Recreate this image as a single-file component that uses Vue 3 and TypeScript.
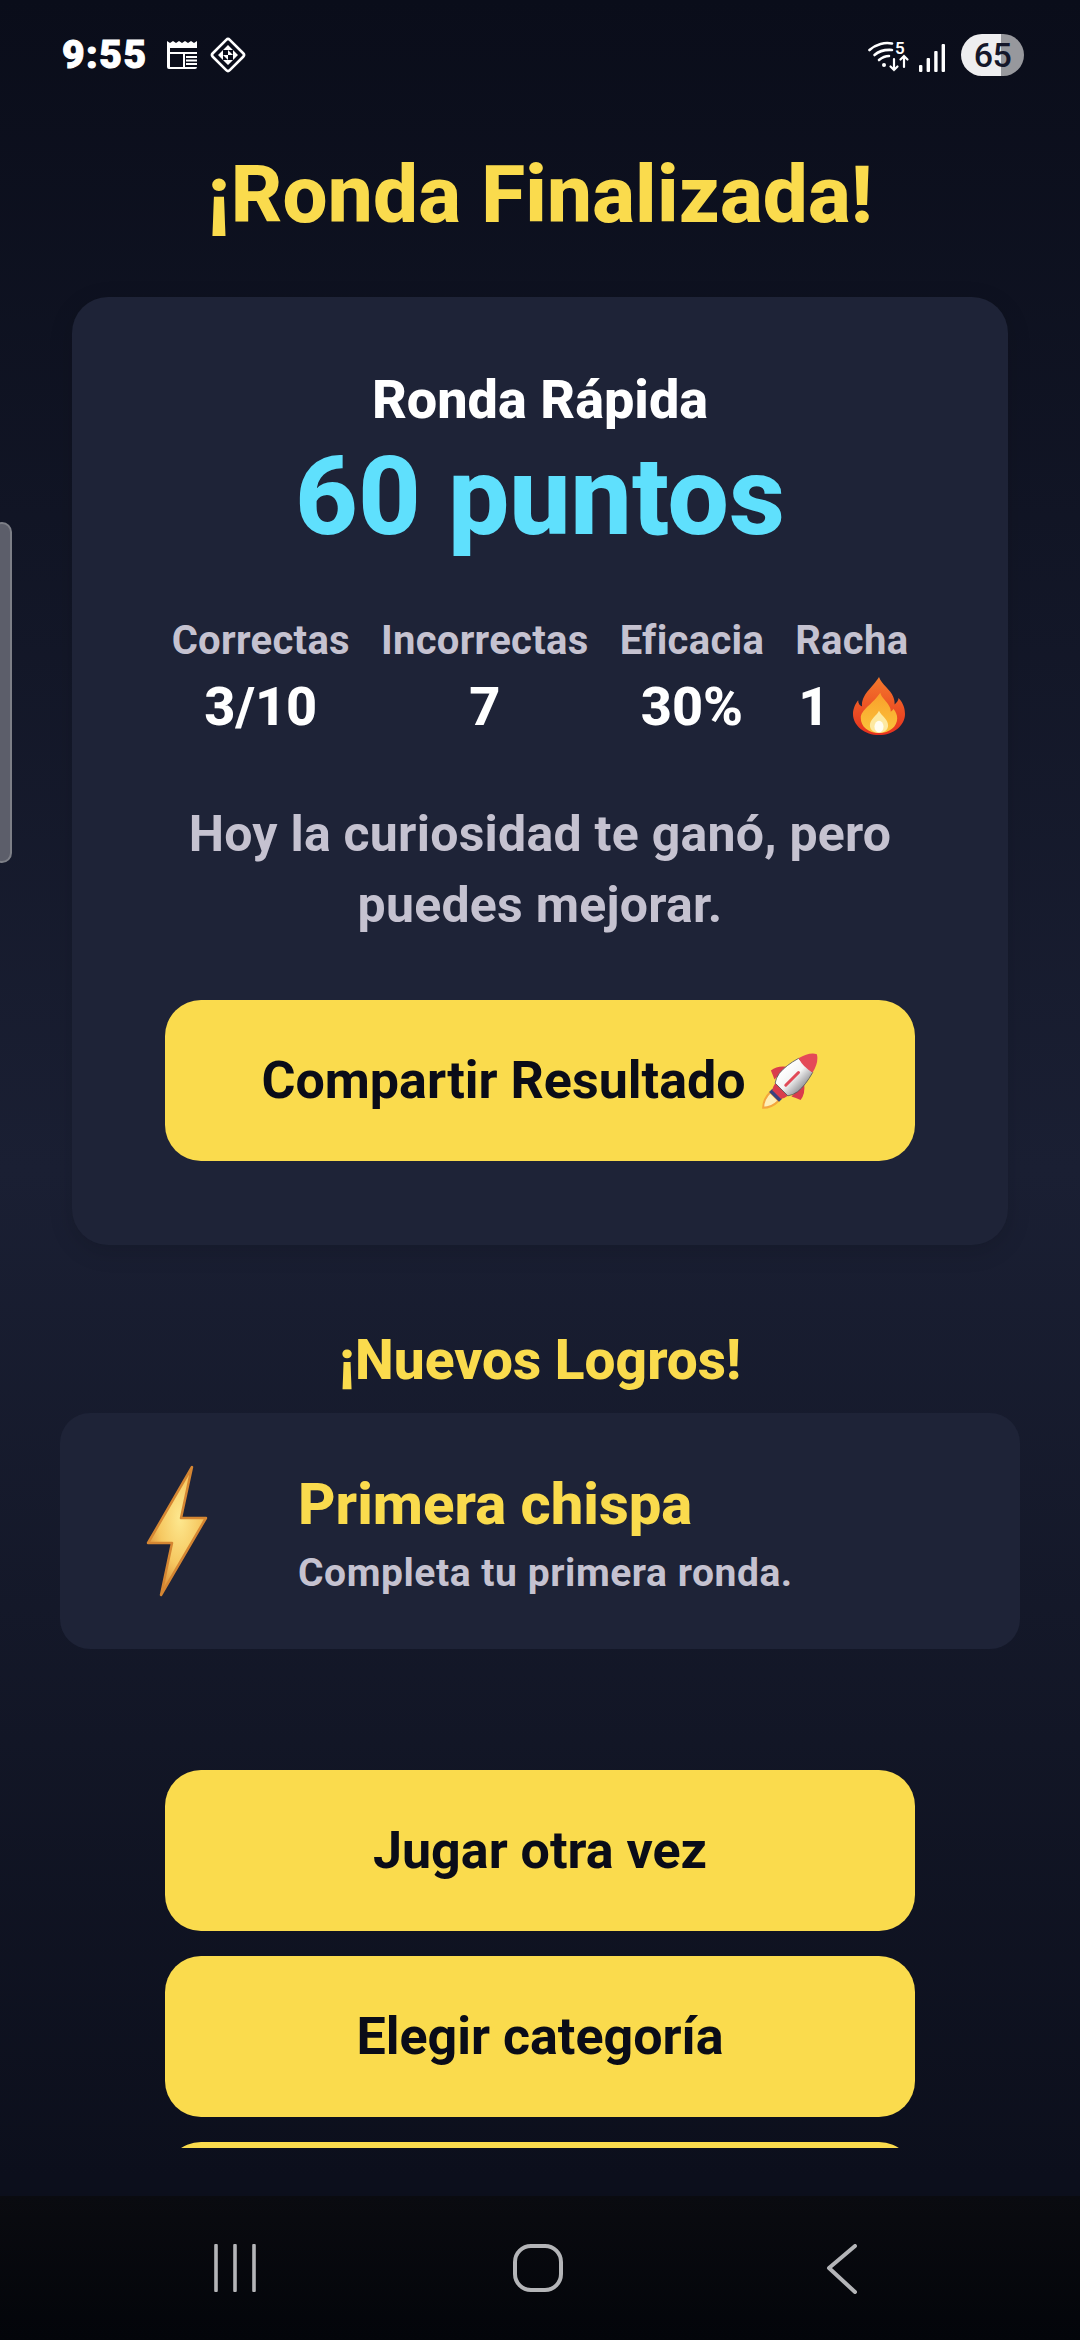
<script setup lang="ts">
const stats = [
  { label: 'Correctas', value: '3/10', fire: false },
  { label: 'Incorrectas', value: '7', fire: false },
  { label: 'Eficacia', value: '30%', fire: false },
  { label: 'Racha', value: '1', fire: true },
]
const actions = ['Jugar otra vez', 'Elegir categoría', 'Volver al inicio']
</script>

<template>
  <div class="screen">
    <div class="edge-handle"></div>
    <header class="status">
      <div class="status-left">
        <span class="time">9:55</span>
        <svg class="ic-news" width="33" height="30" viewBox="0 0 33 30">
          <path d="M0 1l3 2 3-2 3 2 3-2 3 2 3-2 3 2 3-2 3 2 3-2v26a2 2 0 0 1-2 2H2a2 2 0 0 1-2-2z" fill="#fff"/>
          <rect x="3" y="8" width="27" height="19" fill="#0b0e1b"/>
          <rect x="3" y="12" width="27" height="2" fill="#fff"/>
          <rect x="16" y="12" width="2" height="15" fill="#fff"/>
          <path d="M19 17h11M19 20.500h11M19 24h11" stroke="#fff" stroke-width="1.800"/>
        </svg>
        <svg class="ic-diamond" width="38" height="38" viewBox="0 0 38 38">
          <rect x="7" y="7" width="24" height="24" rx="2.500" transform="rotate(45 19 19)" fill="none" stroke="#fff" stroke-width="2.600"/>
          <path d="M19 9l5 5h-10zM19 29l-5-5h10zM9 19l5-5v10zM29 19l-5 5v-10z" fill="#fff"/>
          <path d="M19 14l5 5-5 5-5-5z" fill="#0b0e1b"/>
          <path d="M19 14v5h5zM19 24v-5h-5z" fill="#fff"/>
        </svg>
      </div>
      <div class="status-right">
        <svg width="42" height="34" viewBox="0 0 42 34" class="ic-wifi">
          <g fill="none" stroke="#fff" stroke-width="2.600" stroke-linecap="round">
            <path d="M1.500 11C8 5 17 3 24 4.500"/>
            <path d="M6.500 16C11 12 17 10.500 24 11"/>
            <path d="M11 21C14 18.500 18 17 21 17"/>
            <path d="M26 20v11M22.500 27.500l3.500 3.500 3.500-3.500" stroke-width="2.200"/>
            <path d="M36 28v-11M32.500 20.500l3.500-3.500 3.500 3.500" stroke-width="2.200"/>
          </g>
          <circle cx="16" cy="26" r="2" fill="#fff"/>
          <text x="27" y="15" class="wifi-5">5</text>
        </svg>
        <svg class="ic-signal" width="26" height="28" viewBox="0 0 26 28">
          <g fill="#fff">
            <rect x="0" y="21" width="3.400" height="7" rx="1"/>
            <rect x="7.600" y="14" width="3.400" height="14" rx="1"/>
            <rect x="15.200" y="7" width="3.400" height="21" rx="1"/>
            <rect x="22.600" y="0" width="3.400" height="28" rx="1"/>
          </g>
        </svg>
        <div class="battery"><span class="battery-num">65</span></div>
      </div>
    </header>

    <main class="content">
      <h1 class="title">¡Ronda Finalizada!</h1>

      <section class="result-card">
        <h2 class="mode">Ronda Rápida</h2>
        <p class="score">60 puntos</p>
        <div class="stats">
          <div v-for="s in stats" :key="s.label" class="stat">
            <span class="stat-label">{{ s.label }}</span>
            <span class="stat-value">
              {{ s.value }}
              <svg v-if="s.fire" class="fire" width="52" height="58" viewBox="0 0 40 55" preserveAspectRatio="none">
                <defs>
                  <linearGradient id="fireOuter" x1="0" y1="0" x2="0" y2="1">
                    <stop offset="0" stop-color="#f47a2c"/>
                    <stop offset="1" stop-color="#e6301e"/>
                  </linearGradient>
                  <linearGradient id="fireMid" x1="0" y1="0" x2="0" y2="1">
                    <stop offset="0" stop-color="#f9a02a"/>
                    <stop offset="1" stop-color="#fbc43c"/>
                  </linearGradient>
                </defs>
                <path d="M20 0c2 7 9 12 11 19 1 3 1 5 1 7 2-2 3-4 3-6 4 5 5 11 5 15 0 11-9 20-20 20S0 46 0 35c0-5 2-10 4-13 0 3 1 5 3 6-1-11 8-18 13-28z" fill="url(#fireOuter)"/>
                <path d="M21 15c1 5 5 8 7 13 1 2 1 3 1 5 1-1 2-2 2-3 2 3 3 6 3 9 0 8-6 14-14 14S6 47 6 39c0-8 9-13 15-24z" fill="url(#fireMid)"/>
                <path d="M20 32c2 5 7 8 7 14 0 4-3 7-7 7s-7-3-7-7c0-6 5-9 7-14z" fill="#fde9a0"/>
                <ellipse cx="20" cy="47" rx="3.500" ry="5.500" fill="#fffdf0"/>
              </svg>
            </span>
          </div>
        </div>
        <p class="message">Hoy la curiosidad te ganó, pero puedes mejorar.</p>
        <button class="btn">
          Compartir Resultado
          <svg class="rocket" width="58" height="56" viewBox="0 0 58 56">
            <defs>
              <linearGradient id="rocketBody" x1="0" y1="0" x2="1" y2="0">
                <stop offset="0" stop-color="#ffffff"/>
                <stop offset="0.500" stop-color="#f4f4f4"/>
                <stop offset="1" stop-color="#9a9a9e"/>
              </linearGradient>
            </defs>
            <g transform="translate(29 28) rotate(45)">
              <path d="M-12-8Q-20-2-21 6Q-16 8-12 10ZM12-8Q20-2 21 6Q16 8 12 10Z" fill="#d93c4c"/>
              <path d="M-6 22H6Q6 32 0 38Q-6 32-6 22Z" fill="#fdeeb8" stroke="#f4a63c" stroke-width="2"/>
              <rect x="-7" y="18" width="14" height="4.500" fill="#37427e"/>
              <path d="M-9 11H9Q8 17 6 19H-6Q-8 17-9 11Z" fill="#d93c4c"/>
              <path d="M-10-22Q-14-8-13 2Q-12 8-9 12H9Q12 8 13 2Q14-8 10-22Z" fill="url(#rocketBody)" stroke="#55565c" stroke-width="0.800"/>
              <path d="M-10-22Q-7-34 0-38Q7-34 10-22Q0-19-10-22Z" fill="#e44a58"/>
              <path d="M0-12V6" stroke="#e14a58" stroke-width="3" stroke-linecap="round"/>
            </g>
          </svg>
        </button>
      </section>

      <h2 class="ach-title">¡Nuevos Logros!</h2>
      <section class="ach-card">
        <svg class="bolt" width="62" height="132" viewBox="0 0 62 132">
          <defs>
            <radialGradient id="boltFill" cx="0.550" cy="0.400" r="0.650">
              <stop offset="0" stop-color="#fde88f"/>
              <stop offset="0.550" stop-color="#f6c861"/>
              <stop offset="1" stop-color="#d98732"/>
            </radialGradient>
          </defs>
          <path d="M46 2L35 53h25L15 130l11-52H2z" fill="url(#boltFill)" stroke="#d58632" stroke-width="2.500" stroke-linejoin="round"/>
        </svg>
        <div class="ach-text">
          <h3 class="ach-name">Primera chispa</h3>
          <p class="ach-desc">Completa tu primera ronda.</p>
        </div>
      </section>

      <div class="actions">
        <button v-for="a in actions" :key="a" class="btn">{{ a }}</button>
      </div>
    </main>

    <nav class="navbar">
      <svg width="42" height="48" viewBox="0 0 42 48">
        <path d="M2 1.500v45M21 1.500v45M40 1.500v45" stroke="#b4b5b8" stroke-width="3.600" stroke-linecap="round" fill="none"/>
      </svg>
      <svg width="50" height="48" viewBox="0 0 50 48">
        <rect x="2" y="2" width="46" height="44" rx="16" fill="none" stroke="#b4b5b8" stroke-width="4"/>
      </svg>
      <svg width="32" height="50" viewBox="0 0 32 50">
        <path d="M29 2L3 24l26 24" stroke="#b4b5b8" stroke-width="4" stroke-linecap="round" stroke-linejoin="round" fill="none"/>
      </svg>
    </nav>
  </div>
</template>

<style>
html, body { margin: 0; padding: 0; background: #0b0e1b; }
</style>

<style scoped>
.screen {
  position: relative;
  width: 1080px;
  height: 2340px;
  display: flex;
  flex-direction: column;
  overflow: hidden;
  font-family: Roboto, "Noto Sans", sans-serif;
  color: #fff;
  background: linear-gradient(180deg, #0a0d1a 0%, #1a1f33 50%, #0c0f1c 93%);
}
.edge-handle {
  position: absolute;
  left: -8px;
  top: 522px;
  width: 20px;
  height: 341px;
  box-sizing: border-box;
  border: 2px solid #7d7f87;
  border-radius: 10px;
  background: #5c5e6a;
}
.status {
  flex: none;
  height: 96px;
  box-sizing: border-box;
  padding: 22px 56px 0 62px;
  display: flex;
  justify-content: space-between;
  align-items: flex-start;
}
.status-left { display: flex; align-items: center; gap: 19px; height: 66px; }
.time { font-size: 39px; font-weight: 900; letter-spacing: 1.500px; -webkit-text-stroke: 1px #fff; }
.ic-diamond { margin-left: -10px; }
.status-right { display: flex; align-items: center; gap: 9px; height: 66px; }
.ic-wifi { margin-top: 2px; }
.wifi-5 { font: 600 17px Roboto, sans-serif; fill: #fff; }
.ic-signal { margin-top: 6px; }
.battery {
  width: 63px;
  height: 42px;
  border-radius: 21px;
  margin-left: 7px;
  background: linear-gradient(90deg, #eeeef0 0 63.500%, #97989d 63.500% 100%);
  display: flex;
  align-items: center;
  justify-content: center;
}
.battery-num { color: #14172a; font-size: 34px; font-weight: 500; letter-spacing: -0.500px; }

.content {
  flex: 1;
  min-height: 0;
  display: flex;
  flex-direction: column;
  align-items: center;
  overflow: hidden;
  margin-bottom: 48px;
}
.title {
  margin: 56px 0 0;
  font-size: 80px;
  line-height: 86px;
  font-weight: 800;
  letter-spacing: 0.200px;
  color: #fadb4d;
}
.result-card {
  margin-top: 59px;
  width: 936px;
  height: 948px;
  flex: none;
  box-sizing: border-box;
  padding: 72px 93px 0;
  border-radius: 36px;
  background: #1e2337;
  box-shadow: 0 6px 24px rgba(0, 0, 0, 0.14);
  display: flex;
  flex-direction: column;
  align-items: center;
}
.mode { margin: 0; font-size: 54px; line-height: 62px; font-weight: 800; }
.score {
  margin: 3px 0 0;
  font-size: 109px;
  line-height: 126px;
  font-weight: 800;
  color: #5fe0fd;
}
.stats { margin-top: 59px; display: flex; gap: 31px; justify-content: center; }
.stat { display: flex; flex-direction: column; align-items: center; }
.stat-label { font-size: 40px; line-height: 44px; font-weight: 700; color: #c5c2d0; letter-spacing: 0.300px; }
.stat-value {
  margin-top: 14px;
  height: 60px;
  font-size: 54px;
  line-height: 60px;
  font-weight: 800;
  display: flex;
  align-items: center;
  gap: 24px;
}
.fire { margin-top: -2px; }
.message {
  margin: 62px 0 0;
  font-size: 50px;
  line-height: 71px;
  font-weight: 700;
  color: #c5c2d0;
  text-align: center;
  letter-spacing: 0.250px;
}
.btn {
  flex: none;
  width: 750px;
  height: 161px;
  border: 0;
  border-radius: 36px;
  background: #fadb4d;
  color: #0a0c18;
  font-family: inherit;
  font-size: 52px;
  font-weight: 700;
  display: flex;
  align-items: center;
  justify-content: center;
  gap: 15px;
  padding: 0;
}
.result-card .btn { margin-top: 59px; }
.ach-title {
  margin: 88px 0 0;
  font-size: 55px;
  line-height: 54px;
  font-weight: 800;
  color: #fadb4d;
}
.ach-card {
  margin-top: 26px;
  width: 960px;
  height: 236px;
  flex: none;
  box-sizing: border-box;
  padding: 0 0 0 86px;
  border-radius: 30px;
  background: #1e2337;
  display: flex;
  align-items: center;
  gap: 90px;
}
.ach-text { padding-top: 4px; }
.ach-name { margin: 0; font-size: 58px; line-height: 64px; font-weight: 800; color: #fadb4d; }
.ach-desc { margin: 15px 0 0; font-size: 39px; line-height: 44px; font-weight: 700; color: #c5c2d0; letter-spacing: 0.550px; }
.actions {
  margin-top: 121px;
  display: flex;
  flex-direction: column;
  gap: 25px;
}
.navbar {
  flex: none;
  height: 144px;
  box-sizing: border-box;
  padding: 48px 0 0 214px;
  display: flex;
  align-items: flex-start;
  background: linear-gradient(180deg, #0a0b10 0%, #03050a 100%);
}
.navbar svg:nth-child(2) { margin-left: 257px; }
.navbar svg:nth-child(3) { margin-left: 263px; }
</style>
